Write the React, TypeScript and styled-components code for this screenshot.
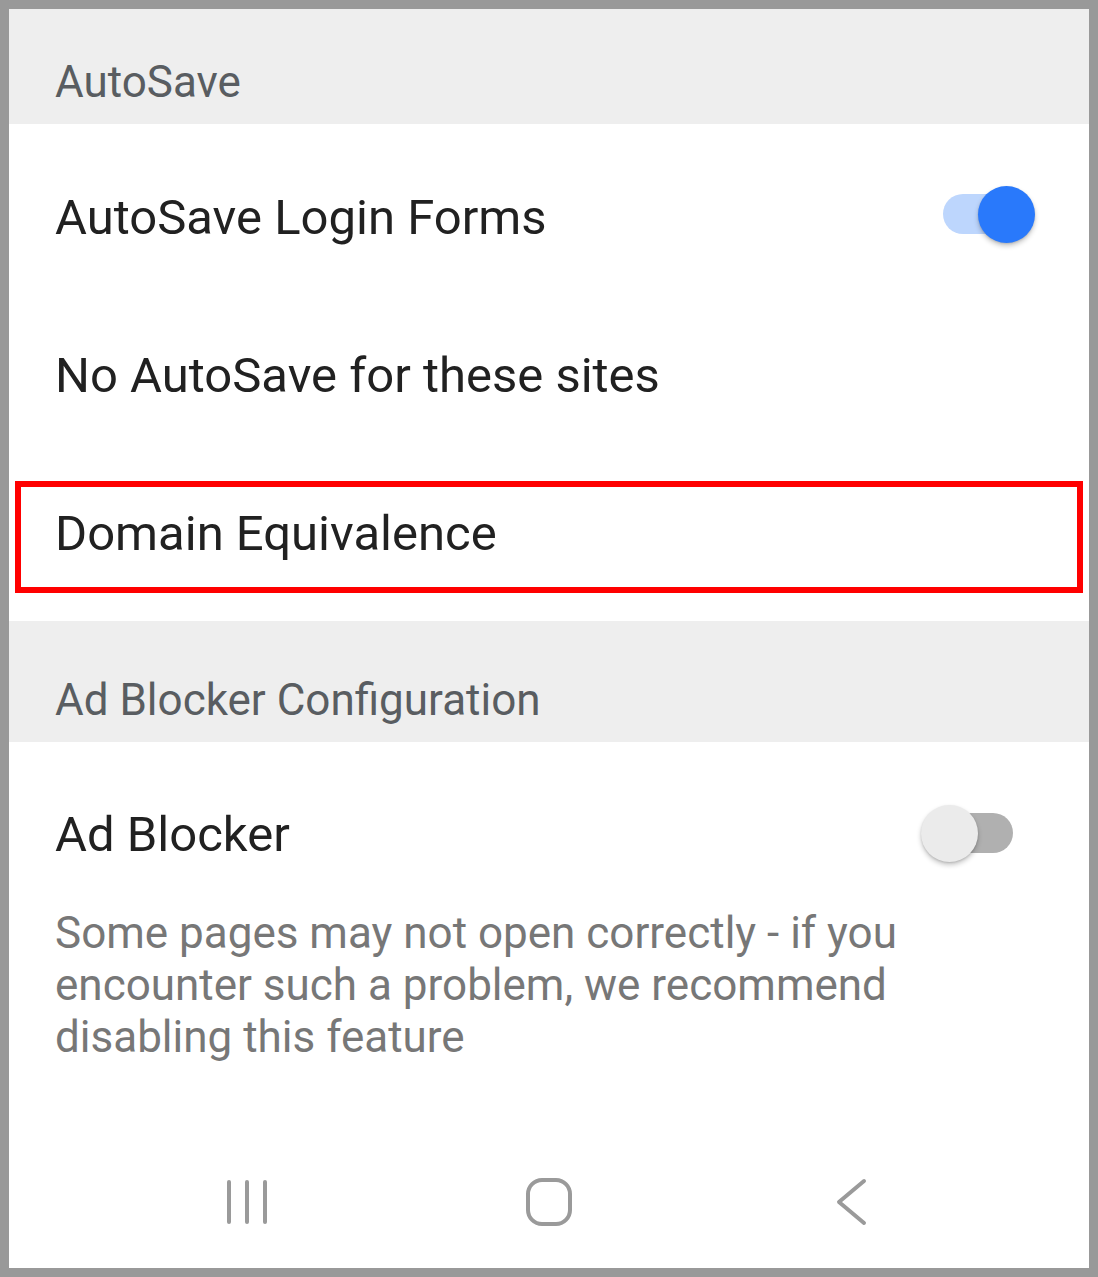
import React from 'react'
import styled, { createGlobalStyle } from 'styled-components'

const GlobalStyle = createGlobalStyle`
  html, body {
    margin: 0;
    padding: 0;
    background: #999999;
  }
  body {
    font-family: Roboto, "Noto Sans", "Liberation Sans", sans-serif;
  }
`

const Frame = styled.div`
  width: 1098px;
  height: 1277px;
  box-sizing: border-box;
  padding: 9px;
  background: #999999;
`

const Screen = styled.div`
  height: 100%;
  background: #ffffff;
  display: flex;
  flex-direction: column;
  overflow: hidden;
`

const SectionHeader = styled.div<{ $top: number }>`
  background: #eeeeee;
  padding: ${p => p.$top}px 46px 16px;
  font-size: 44px;
  line-height: 52px;
  color: #595d61;
`

const RowGroup = styled.div`
  padding: 15px 0 8px;
`

const Row = styled.div`
  position: relative;
  height: 158px;
  display: flex;
  align-items: center;
  justify-content: space-between;
  padding: 0 76px 0 46px;
`

const Title = styled.div`
  font-size: 49px;
  line-height: 56px;
  color: #212121;
`

const Highlight = styled.div`
  position: absolute;
  left: 6px;
  right: 6px;
  top: 26px;
  bottom: 20px;
  border: 6.5px solid #ff0000;
  pointer-events: none;
`

const Track = styled.div<{ $on: boolean }>`
  position: relative;
  width: 70px;
  height: 40px;
  border-radius: 20px;
  background: ${p => (p.$on ? '#bdd6fd' : '#b0b0b0')};
  margin-top: ${p => (p.$on ? '-8px' : '-4px')};
`

const Thumb = styled.div<{ $on: boolean }>`
  position: absolute;
  top: -8.5px;
  left: ${p => (p.$on ? '35px' : '-22.5px')};
  width: 57px;
  height: 57px;
  border-radius: 50%;
  background: ${p => (p.$on ? '#2979fb' : '#ebebeb')};
  box-shadow: 0 3px 5px rgba(0, 0, 0, 0.22), 0 1px 2px rgba(0, 0, 0, 0.12);
`

const Toggle: React.FC<{ on: boolean }> = ({ on }) => (
  <Track $on={on}>
    <Thumb $on={on} />
  </Track>
)

const BlockerSection = styled.div`
  padding: 65px 0 0;
`

const BlockerRow = styled.div`
  display: flex;
  align-items: center;
  justify-content: space-between;
  padding: 0 76px 0 46px;
`

const Description = styled.div`
  margin-top: 44px;
  padding: 0 120px 0 46px;
  font-size: 44px;
  line-height: 52px;
  color: #777777;
`

const NavBar = styled.div`
  margin-top: auto;
  height: 132px;
  display: flex;
  align-items: center;
  justify-content: center;
  gap: 202px;
`

const NavSlot = styled.div`
  width: 100px;
  display: flex;
  justify-content: center;
  align-items: center;
`

const iconStroke = '#9a9a9a'

const RecentsIcon = () => (
  <svg width="44" height="48" viewBox="0 0 44 48">
    <g stroke={iconStroke} strokeWidth="4" strokeLinecap="round">
      <line x1="4" y1="4" x2="4" y2="44" />
      <line x1="22" y1="4" x2="22" y2="44" />
      <line x1="40" y1="4" x2="40" y2="44" />
    </g>
  </svg>
)

const HomeIcon = () => (
  <svg width="48" height="48" viewBox="0 0 48 48">
    <rect x="3" y="2" width="42" height="44" rx="14" fill="none" stroke={iconStroke} strokeWidth="4" />
  </svg>
)

const BackIcon = () => (
  <svg width="32" height="48" viewBox="0 0 32 48">
    <polyline
      points="29,3 4,24 29,45"
      fill="none"
      stroke={iconStroke}
      strokeWidth="4"
      strokeLinecap="round"
      strokeLinejoin="round"
    />
  </svg>
)

const App: React.FC = () => (
  <>
    <GlobalStyle />
    <Frame>
      <Screen>
        <SectionHeader $top={47}>AutoSave</SectionHeader>
        <RowGroup>
          <Row>
            <Title>AutoSave Login Forms</Title>
            <Toggle on />
          </Row>
          <Row>
            <Title>No AutoSave for these sites</Title>
          </Row>
          <Row>
            <Title>Domain Equivalence</Title>
            <Highlight />
          </Row>
        </RowGroup>
        <SectionHeader $top={53}>Ad Blocker Configuration</SectionHeader>
        <BlockerSection>
          <BlockerRow>
            <Title>Ad Blocker</Title>
            <Toggle on={false} />
          </BlockerRow>
          <Description>
            Some pages may not open correctly - if you encounter such a problem, we recommend disabling this
            feature
          </Description>
        </BlockerSection>
        <NavBar>
          <NavSlot>
            <RecentsIcon />
          </NavSlot>
          <NavSlot>
            <HomeIcon />
          </NavSlot>
          <NavSlot>
            <BackIcon />
          </NavSlot>
        </NavBar>
      </Screen>
    </Frame>
  </>
)

export default App
